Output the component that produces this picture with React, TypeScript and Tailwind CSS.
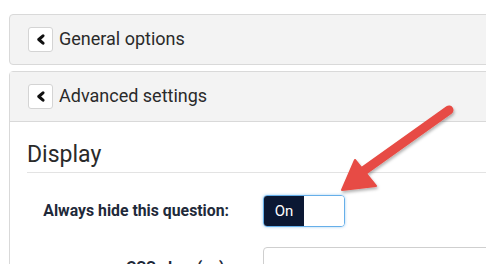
import React from 'react';

function Chevron() {
  return (
    <span className="flex h-[25px] w-[25px] items-center justify-center rounded-[3px] border border-[#d4d4d4] bg-white">
      <svg width="10" height="11" viewBox="0 0 10 11">
        <path d="M7 1.8L2.8 5.5 7 9.2" fill="none" stroke="#111" strokeWidth="3" strokeLinecap="round" strokeLinejoin="round" />
      </svg>
    </span>
  );
}

function PanelHeading({ title }: { title: string }) {
  return (
    <div className="flex h-[49px] items-center gap-[6px] pl-[18px]">
      <Chevron />
      <span className="-mt-[2px] text-[18px] text-[#2a2a2a]">{title}</span>
    </div>
  );
}

export default function App() {
  return (
    <div className="relative h-[264px] w-[486px] overflow-hidden bg-white font-['Roboto',sans-serif]">
      <div className="flex w-[520px] flex-col gap-[6px] pl-[9px] pt-[14px]">
        <div className="rounded-l-[4px] border border-[#d9d9d9] bg-[#f3f3f3]">
          <PanelHeading title="General options" />
        </div>

        <div className="rounded-tl-[4px] border border-[#d9d9d9]">
          <div className="border-b border-[#d9d9d9] bg-[#f3f3f3]">
            <PanelHeading title="Advanced settings" />
          </div>
          <div className="bg-white pl-[17px] pt-[19px]">
            <h2 className="border-b border-[#e3e3e3] pb-[3px] text-[23px] leading-[28px] font-normal text-[#2a2a2a]">
              Display
            </h2>
            <div className="mt-[22px] grid grid-cols-[202px_1fr] items-center gap-x-[34px] gap-y-[20px]">
              <label className="text-right text-[15.8px] font-bold text-[#1f2a3a]">
                Always hide this question:
              </label>
              <div className="flex h-[32px] w-[82px] overflow-hidden rounded-[4px] border border-[#66afe9] shadow-[0_0_3px_rgba(102,175,233,0.6)]">
                <span className="flex w-[40px] items-center justify-center bg-[#0b1833] text-[15px] text-white">
                  On
                </span>
                <span className="flex-1 bg-white" />
              </div>
              <label className="pt-[8px] text-right text-[15.8px] font-bold text-[#1f2a3a]">
                CSS class(es):
              </label>
              <div className="h-[34px] rounded-[4px] border border-[#cfcfcf] bg-white" />
            </div>
          </div>
        </div>
      </div>

      <svg className="pointer-events-none absolute left-0 top-0" width="486" height="264" viewBox="0 0 486 264">
        <defs>
          <filter id="sh" x="-20%" y="-20%" width="140%" height="140%">
            <feDropShadow dx="1" dy="2" stdDeviation="1.5" floodColor="#000" floodOpacity="0.3" />
          </filter>
        </defs>
        <g filter="url(#sh)">
          <line x1="449" y1="110" x2="362" y2="172" stroke="#e74c44" strokeWidth="9" strokeLinecap="round" />
          <path d="M342 190 L355 160 L376 186 Z" fill="#e74c44" stroke="#e74c44" strokeWidth="2" strokeLinejoin="round" />
        </g>
      </svg>
    </div>
  );
}
